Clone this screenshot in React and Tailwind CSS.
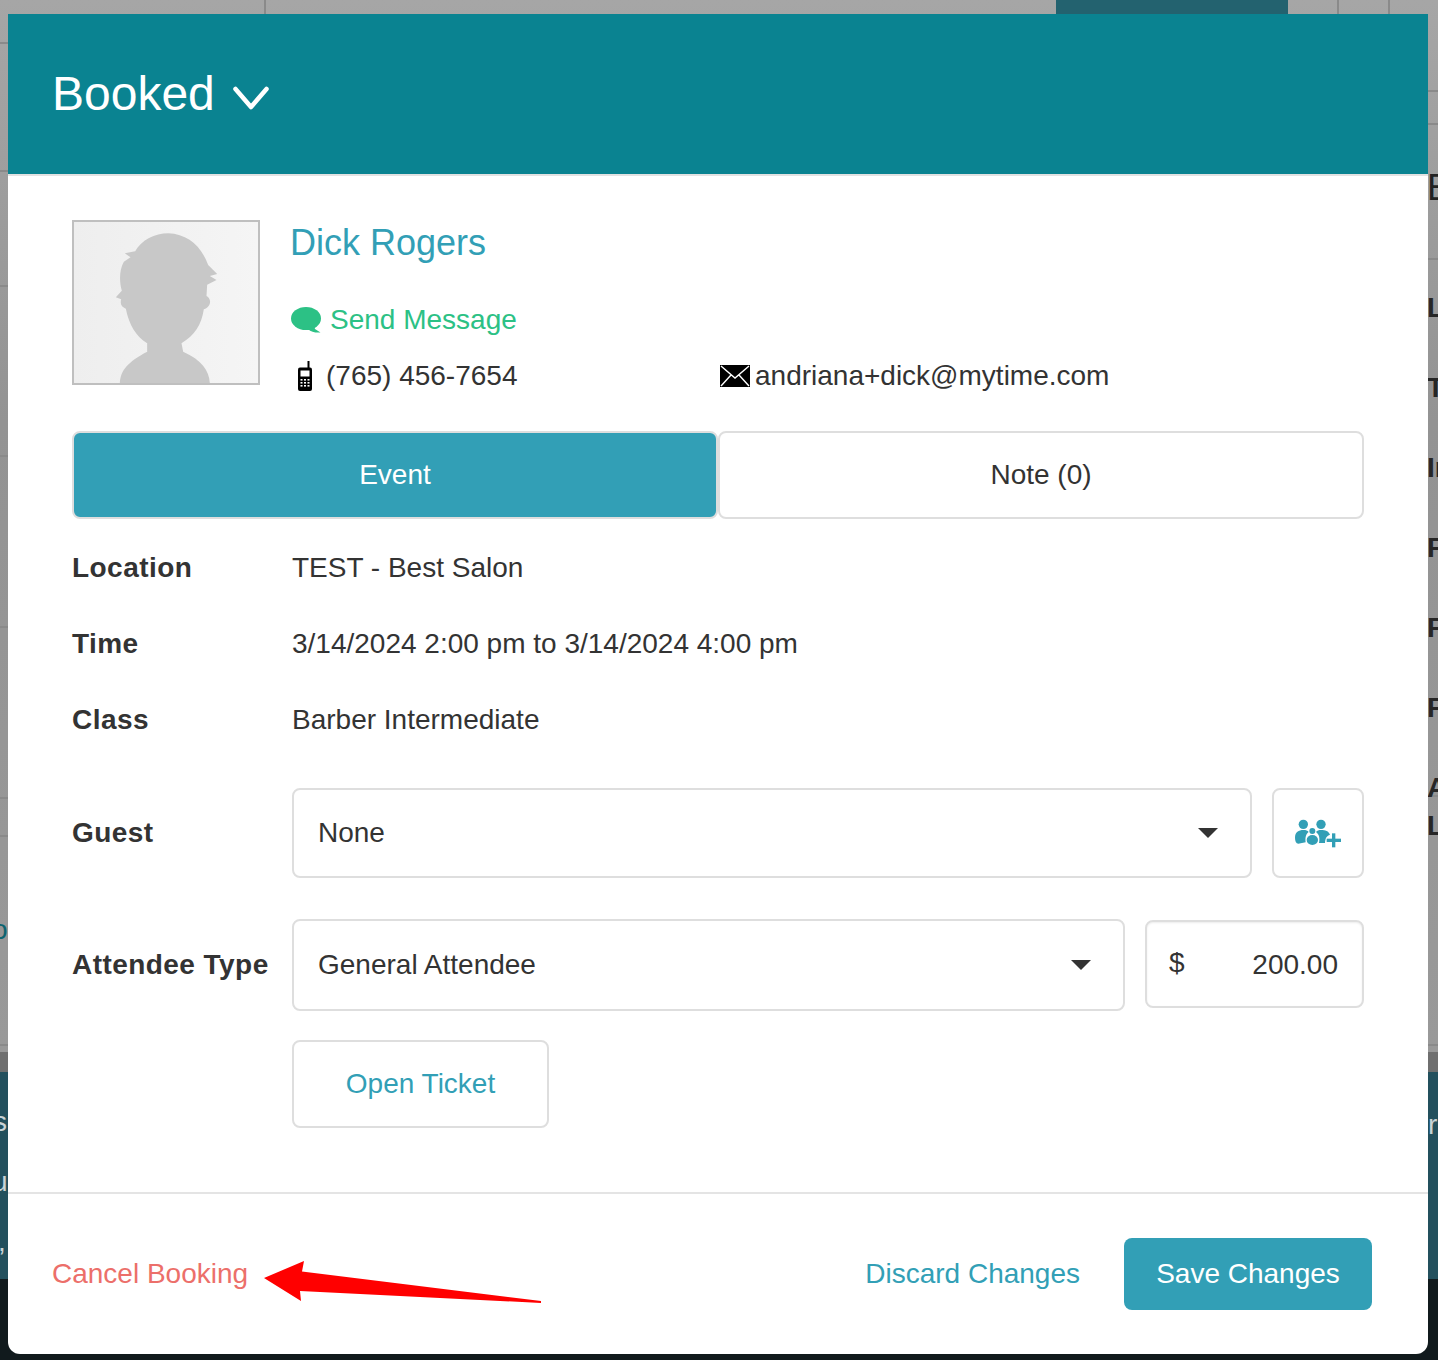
import React from "react";

const FONT = "font-['Liberation_Sans',Arial,sans-serif]";

const backLines = [
  "top-[42px] left-0 w-[8px] h-[2px]",
  "top-[170px] left-0 w-[8px] h-[2px]",
  "top-[285px] left-0 w-[8px] h-[2px]",
  "top-[455px] left-0 w-[8px] h-[2px]",
  "top-[626px] left-0 w-[8px] h-[2px]",
  "top-[797px] left-0 w-[8px] h-[2px]",
  "top-[835px] left-0 w-[8px] h-[2px]",
  "top-[1044px] left-0 w-[8px] h-[2px]",
  "top-[90px] left-[1428px] w-[10px] h-[2px]",
  "top-[123px] left-[1428px] w-[10px] h-[2px]",
  "top-[258px] left-[1428px] w-[10px] h-[2px]",
  "top-[795px] left-[1428px] w-[10px] h-[2px]",
  "top-[1044px] left-[1428px] w-[10px] h-[2px]",
  "top-0 left-[264px] w-[2px] h-[14px]",
  "top-0 left-[1337px] w-[2px] h-[14px]",
  "top-0 left-[1388px] w-[2px] h-[14px]",
];

const backLetters = [
  { text: "L", pos: "top-[292px]" },
  { text: "T", pos: "top-[372px]" },
  { text: "In", pos: "top-[452px]" },
  { text: "F", pos: "top-[532px]" },
  { text: "F", pos: "top-[612px]" },
  { text: "F", pos: "top-[692px]" },
  { text: "A", pos: "top-[772px]" },
  { text: "L", pos: "top-[810px]" },
];

const Backdrop = () => (
  <div className="absolute inset-0 flex flex-col">
    <div className="h-[1052px] bg-[linear-gradient(180deg,#a6a6a6_0%,#939393_40%,#999999_100%)]" />
    <div className="h-[20px] bg-[#6f6f6f]" />
    <div className="h-[207px] bg-[#23505d]" />
    <div className="flex-1 bg-[#111a1d]" />
    <div className="absolute top-0 left-[1056px] w-[232px] h-[14px] bg-[#23626f]" />
    {backLines.map((cls) => (
      <div key={cls} className={`absolute bg-[#8a8a8a] ${cls}`} />
    ))}
    <span className="absolute top-[166px] left-[1427px] text-[36px] leading-[44px] text-[#222]">E</span>
    {backLetters.map((l) => (
      <span key={l.pos} className={`absolute left-[1427px] text-[28px] leading-[32px] font-bold text-[#262626] ${l.pos}`}>
        {l.text}
      </span>
    ))}
    <span className="absolute top-[914px] left-[-8px] text-[28px] leading-[32px] text-[#0d6470]">o</span>
    <span className="absolute top-[1106px] left-[-7px] text-[28px] leading-[32px] text-[#c9d3d6]">s</span>
    <span className="absolute top-[1166px] left-[-8px] text-[28px] leading-[32px] text-[#c9d3d6]">u</span>
    <span className="absolute top-[1226px] left-[-2px] text-[28px] leading-[32px] text-[#c9d3d6]">,</span>
    <span className="absolute top-[1109px] left-[1428px] text-[28px] leading-[32px] text-[#c9d3d6]">r</span>
  </div>
);

const Avatar = () => (
  <div className="w-[188px] h-[165px] shrink-0 border-2 border-[#bfbfbf] bg-[linear-gradient(90deg,#eeeeee,#f5f5f5)]">
    <svg viewBox="43 36 551 483" className="w-full h-full block">
      <path
        fill="#c8c8c8"
        d="M180 519 C182 480 205 455 262 425 L262 400 C228 378 208 345 198 296 C186 292 180 284 184 268 L168 262 L186 242 C178 215 178 180 192 155 L212 142 L195 130 L226 124 C245 90 285 70 325 70 C385 72 425 110 445 165 L472 192 L450 198 L470 210 L442 224 L440 258 C455 265 456 290 432 298 C425 345 405 375 365 400 L370 425 C425 450 448 480 450 519 Z"
      />
    </svg>
  </div>
);

const BubbleIcon = () => (
  <svg viewBox="0 0 30 26" className="w-[30px] h-[26px] shrink-0">
    <ellipse cx="15" cy="11.5" rx="15" ry="11.5" fill="#2cc185" />
    <path d="M17 20 L23 19 L24 22 L29.5 25.5 C25 26 20 25 17 22 Z" fill="#2cc185" />
  </svg>
);

const PhoneIcon = () => (
  <svg viewBox="0 0 14 30" className="w-[14px] h-[30px] shrink-0 -mt-px">
    <rect x="9.5" y="0" width="2" height="8" fill="#000" />
    <rect x="0" y="6.5" width="14" height="23.5" rx="2" fill="#000" />
    <rect x="2.5" y="9.5" width="9" height="6" fill="#fff" />
    <g fill="#fff">
      <rect x="2.5" y="18" width="2" height="1.6" />
      <rect x="6" y="18" width="2" height="1.6" />
      <rect x="9.5" y="18" width="2" height="1.6" />
      <rect x="2.5" y="21" width="2" height="1.6" />
      <rect x="6" y="21" width="2" height="1.6" />
      <rect x="9.5" y="21" width="2" height="1.6" />
      <rect x="2.5" y="24" width="2" height="1.6" />
      <rect x="6" y="24" width="2" height="1.6" />
      <rect x="9.5" y="24" width="2" height="1.6" />
    </g>
  </svg>
);

const MailIcon = () => (
  <svg viewBox="0 0 30 22" className="w-[30px] h-[22px] shrink-0">
    <rect width="30" height="22" fill="#000" />
    <path d="M1 1 L15 13 L29 1 M1 21 L11 10 M29 21 L19 10" fill="none" stroke="#fff" strokeWidth="1.4" />
  </svg>
);

const GroupAddIcon = () => (
  <svg viewBox="465 116 141 87" className="w-[47px] h-[29px]">
    <g fill="#329fb6">
      <circle cx="490" cy="132" r="14" />
      <circle cx="543" cy="132" r="14" />
      <circle cx="517" cy="152" r="9" />
      <path d="M465 172 C465 155 476 149 490 149 C498 149 503 151 506 155 C498 161 495 170 497 186 L475 190 C468 189 465 182 465 172 Z" />
      <path d="M528 155 C532 151 536 149 543 149 C556 149 566 152 570 163 C561 166 556 172 555 188 L537 188 C540 172 537 162 528 155 Z" />
      <ellipse cx="517" cy="179" rx="17" ry="15" />
      <rect x="576" y="159" width="10" height="42" />
      <rect x="560" y="175" width="43" height="10" />
    </g>
  </svg>
);

const Caret = () => <svg viewBox="0 0 20 10" className="w-[20px] h-[10px] shrink-0"><path d="M0 0 H20 L10 10 Z" fill="#333" /></svg>;

const Select = ({ value, className }) => (
  <div className={`flex items-center justify-between pl-[24px] pr-[32px] bg-white border-2 border-[#dedede] rounded-[8px] ${className}`}>
    <span>{value}</span>
    <Caret />
  </div>
);

const InfoRow = ({ label, value }) => (
  <div className="flex items-center h-[76px]">
    <div className="w-[220px] font-bold tracking-[0.45px]">{label}</div>
    <div>{value}</div>
  </div>
);

const App = () => {
  return (
    <div className={`relative w-[1438px] h-[1360px] overflow-hidden text-[28px] text-[#333] ${FONT}`}>
      <Backdrop />

      <div className="relative flex flex-col ml-[8px] top-[14px] w-[1420px] h-[1340px] bg-white rounded-b-[12px]">
        <div className="flex items-center gap-[18px] h-[162px] shrink-0 pl-[44px] bg-[#0a8391] border-b-2 border-[#e2e2e2] text-white">
          <span className="text-[48px] leading-none">Booked</span>
          <svg viewBox="0 0 36 24" className="w-[36px] h-[24px] mt-[8px]">
            <path d="M2.5 3 L18 21 L33.5 3" fill="none" stroke="#fff" strokeWidth="4.5" strokeLinecap="round" strokeLinejoin="round" />
          </svg>
        </div>

        <div className="flex-1 px-[64px] pt-[44px]">
          <div className="flex gap-[30px]">
            <Avatar />
            <div className="flex flex-col">
              <div className="text-[36px] leading-[46px] text-[#329fb6]">Dick Rogers</div>
              <div className="flex items-center gap-[9px] h-[48px] mt-[30px] ml-px text-[#2cc185]">
                <BubbleIcon />
                <span>Send Message</span>
              </div>
              <div className="flex items-center h-[40px] mt-[12px]">
                <div className="flex items-center w-[430px] pl-[8px] gap-[14px]">
                  <PhoneIcon />
                  <span>(765) 456-7654</span>
                </div>
                <div className="flex items-center gap-[5px]">
                  <MailIcon />
                  <span>andriana+dick@mytime.com</span>
                </div>
              </div>
            </div>
          </div>

          <div className="flex mt-[35px]">
            <button className="w-[646px] h-[88px] bg-[#329fb6] border-2 border-[#dedede] rounded-[8px] text-white">Event</button>
            <button className="w-[646px] h-[88px] bg-white border-2 border-[#dedede] rounded-[8px]">Note (0)</button>
          </div>

          <div className="mt-[11px]">
            <InfoRow label="Location" value="TEST - Best Salon" />
            <InfoRow label="Time" value="3/14/2024 2:00 pm to 3/14/2024 4:00 pm" />
            <InfoRow label="Class" value="Barber Intermediate" />
          </div>

          <div className="flex items-center mt-[30px]">
            <div className="w-[220px] font-bold tracking-[0.45px]">Guest</div>
            <Select value="None" className="w-[960px] h-[90px]" />
            <button className="flex items-center justify-center w-[92px] h-[90px] ml-[20px] border-2 border-[#dedede] rounded-[8px]">
              <GroupAddIcon />
            </button>
          </div>

          <div className="flex items-start mt-[41px]">
            <div className="w-[220px] h-[92px] flex items-center font-bold tracking-[0.45px]">Attendee Type</div>
            <Select value="General Attendee" className="w-[833px] h-[92px]" />
            <div className="flex items-center justify-between w-[219px] h-[88px] ml-[20px] mt-px pl-[22px] pr-[24px] border-2 border-[#dedede] rounded-[8px] shadow-[inset_0_1px_2px_rgba(0,0,0,0.08)]">
              <span className="-mt-[3px]">$</span>
              <span className="mt-px">200.00</span>
            </div>
          </div>

          <div className="ml-[220px] mt-[29px]">
            <button className="w-[257px] h-[88px] border-2 border-[#dedede] rounded-[8px] text-[#329fb6]">Open Ticket</button>
          </div>
        </div>

        <div className="flex items-center h-[162px] shrink-0 pl-[44px] pr-[56px] border-t-2 border-[#e4e4e4]">
          <span className="text-[#ec6f6a]">Cancel Booking</span>
          <span className="ml-auto text-[#329fb6]">Discard Changes</span>
          <button className="w-[248px] h-[72px] ml-[44px] rounded-[8px] bg-[#329fb6] text-white">Save Changes</button>
        </div>

        {/* annotation arrow */}
        <svg viewBox="0 0 280 46" className="absolute left-[256px] top-[1246px] w-[280px] h-[46px]">
          <path d="M0 18 L40 1 L38 11.5 L277 41 L277 43 L36 31 L37 41 Z" fill="#ff0000" />
        </svg>
      </div>
    </div>
  );
};

export default App;
